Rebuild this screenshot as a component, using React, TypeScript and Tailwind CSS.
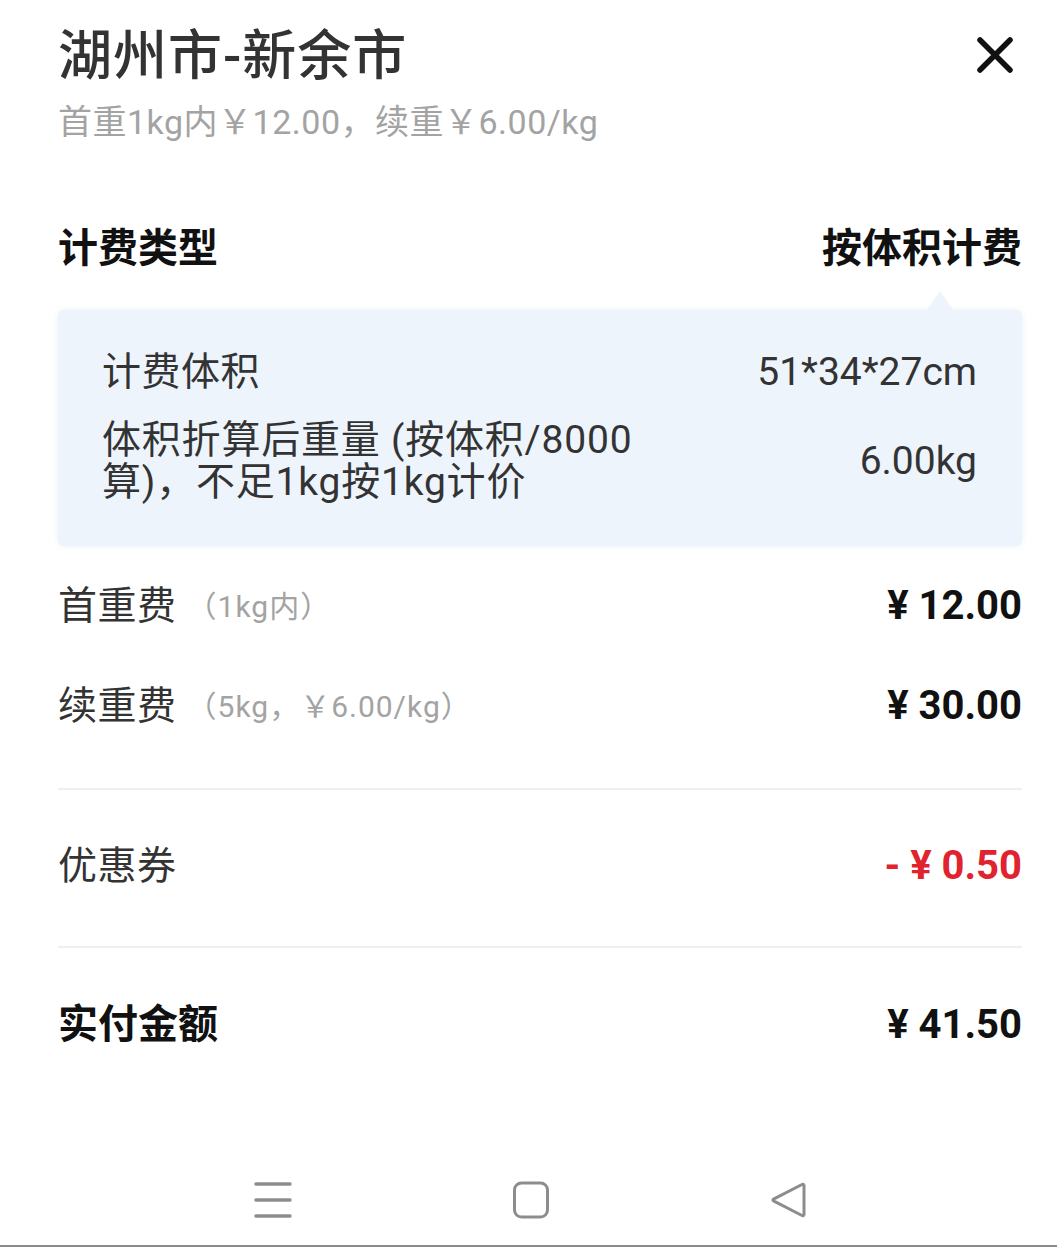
const font = "font-['Roboto','Noto_Sans_CJK_SC',sans-serif]";

const feeRows = [
  { label: "首重费", note: "（1kg内）", amount: "¥ 12.00" },
  { label: "续重费", note: "（5kg，￥6.00/kg）", amount: "¥ 30.00" },
];

function CloseIcon() {
  return (
    <svg width="38" height="38" viewBox="0 0 38 38" fill="none">
      <path d="M4 4L34 34M34 4L4 34" stroke="#111" strokeWidth="5.5" strokeLinecap="round" />
    </svg>
  );
}

function NavBar() {
  return (
    <div className="flex h-[92px] items-center justify-between border-b-2 border-[#8a8a8a] pl-[254px] pr-[250px]">
      <svg width="38" height="38" viewBox="0 0 38 38" fill="none">
        <path d="M2 3H36M2 19H36M2 35H36" stroke="#8d8d8d" strokeWidth="3.5" strokeLinecap="round" />
      </svg>
      <svg width="38" height="38" viewBox="0 0 38 38" fill="none">
        <rect x="2.5" y="2" width="33" height="34" rx="7" stroke="#8d8d8d" strokeWidth="3" />
      </svg>
      <svg width="38" height="38" viewBox="0 0 38 38" fill="none">
        <path d="M33 3.5L4.5 18.2C3.7 18.6 3.7 19.4 4.5 19.8L33 34.5C34 35 35 34.5 35 33.5V4.5C35 3.5 34 3 33 3.5Z" stroke="#8d8d8d" strokeWidth="3" strokeLinejoin="round" />
      </svg>
    </div>
  );
}

export default function App() {
  return (
    <div className={`flex h-[1247px] w-full flex-col bg-white ${font}`}>
      <div className="pl-[58px] pr-[35px]">
        {/* header */}
        <div className="flex items-start justify-between pt-[26px]">
          <h1 className="text-[54px] font-medium leading-[62px] tracking-[1px] text-[#333]">湖州市-新余市</h1>
          <div className="mr-[8px] mt-[10px]">
            <CloseIcon />
          </div>
        </div>
        <p className="mt-[14px] text-[34px] leading-[40px] tracking-[0.5px] text-[#a3a3a3]">首重1kg内￥12.00，续重￥6.00/kg</p>

        {/* billing type */}
        <div className="mt-[83px] flex items-center justify-between text-[40px] font-bold leading-[48px] text-[#111]">
          <span>计费类型</span>
          <span>按体积计费</span>
        </div>

        <div className="relative mt-[37px] h-[236px] rounded-[6px] bg-[#eef4fc] pl-[44px] pr-[45px] pt-[38px] shadow-[0_0_6px_rgba(200,215,235,0.35)]">
          <div className="absolute -top-[19px] right-[68px] h-0 w-0 border-x-[14px] border-b-[20px] border-x-transparent border-b-[#eef4fc]" />
          <div className="flex items-center justify-between text-[39px] leading-[48px] text-[#333]">
            <span className="tracking-[0.5px]">计费体积</span>
            <span>51*34*27cm</span>
          </div>
          <div className="mt-[23px] flex items-center justify-between text-[39px] leading-[42px] text-[#333]">
            <div className="tracking-[0.8px]">
              <span className="block">体积折算后重量 (按体积/8000</span>
              <span className="block">算)，不足1kg按1kg计价</span>
            </div>
            <span>6.00kg</span>
          </div>
        </div>

        {/* fees */}
        <div className="mt-[10px]">
          {feeRows.map((row) => (
            <div key={row.label} className="flex h-[100px] items-center justify-between">
              <div className="flex items-center">
                <span className="text-[39px] tracking-[0.5px] text-[#333]">{row.label}</span>
                <span className="ml-[10px] text-[30px] tracking-[1px] text-[#a3a3a3]">{row.note}</span>
              </div>
              <span className="text-[40px] font-bold text-[#111]">{row.amount}</span>
            </div>
          ))}
        </div>

        <div className="mt-[32px] h-[2px] bg-[#efefef]" />
        <div className="flex h-[152px] items-center justify-between">
          <span className="text-[39px] tracking-[0.5px] text-[#333]">优惠券</span>
          <span className="text-[40px] font-bold text-[#e0232e]">- ¥ 0.50</span>
        </div>
        <div className="mt-[4px] h-[2px] bg-[#efefef]" />
        <div className="flex h-[154px] items-center justify-between">
          <span className="text-[40px] font-bold text-[#111]">实付金额</span>
          <span className="text-[40px] font-bold text-[#111]">¥ 41.50</span>
        </div>
      </div>

      <div className="flex-1" />
      <NavBar />
    </div>
  );
}
